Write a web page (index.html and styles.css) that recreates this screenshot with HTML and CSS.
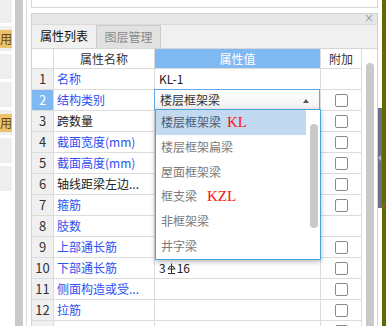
FILE: index.html
```html
<!DOCTYPE html>
<html lang="zh-CN">
<head>
    <meta charset="UTF-8">
    <title>属性列表</title>
    <link rel="stylesheet" href="styles.css">
</head>
<body>
<div class="screen">
    <div class="side">
        <div class="blk"></div>
        <div class="blk"><span class="tag">用</span></div>
        <div class="blk"></div>
        <div class="blk"></div>
        <div class="blk"><span class="tag">用</span></div>
        <div class="blk"></div>
        <div class="blk"></div>
    </div>
    <div class="gutter"></div>
    <div class="rail"></div>

    <div class="main">
        <div class="top-panel"></div>
        <div class="panel">
            <div class="panel-head"><span class="close">×</span></div>
            <div class="tabs">
                <div class="tab active">属性列表</div>
                <div class="tab">图层管理</div>
            </div>
            <div class="panel-body">
                <div class="grid">
                    <div class="c h"></div>
                    <div class="c h">属性名称</div>
                    <div class="c h hv">属性值</div>
                    <div class="c h">附加</div>

                    <div class="c n">1</div>
                    <div class="c name">名称</div>
                    <div class="c val">KL-1</div>
                    <div class="c chk"></div>

                    <div class="c n sel">2</div>
                    <div class="c name">结构类别</div>
                    <div class="c val">
                        <div class="select">楼层框架梁<span class="arrow"></span></div>
                    </div>
                    <div class="c chk"><span class="box"></span></div>

                    <div class="c n">3</div>
                    <div class="c name plain">跨数量</div>
                    <div class="c val"></div>
                    <div class="c chk"><span class="box"></span></div>

                    <div class="c n">4</div>
                    <div class="c name">截面宽度(mm)</div>
                    <div class="c val"></div>
                    <div class="c chk"><span class="box"></span></div>

                    <div class="c n">5</div>
                    <div class="c name">截面高度(mm)</div>
                    <div class="c val"></div>
                    <div class="c chk"><span class="box"></span></div>

                    <div class="c n">6</div>
                    <div class="c name plain">轴线距梁左边...</div>
                    <div class="c val"></div>
                    <div class="c chk"><span class="box"></span></div>

                    <div class="c n">7</div>
                    <div class="c name">箍筋</div>
                    <div class="c val"></div>
                    <div class="c chk"><span class="box"></span></div>

                    <div class="c n">8</div>
                    <div class="c name">肢数</div>
                    <div class="c val"></div>
                    <div class="c chk"></div>

                    <div class="c n">9</div>
                    <div class="c name">上部通长筋</div>
                    <div class="c val"></div>
                    <div class="c chk"><span class="box"></span></div>

                    <div class="c n">10</div>
                    <div class="c name">下部通长筋</div>
                    <div class="c val">3<svg class="bar" width="9" height="11" viewBox="0 0 9 11"><path d="M4.5 0.5v10M1.5 6a3 3 0 0 1 6 0M0.5 6h8M1 10.5h7" fill="none" stroke="#333" stroke-width="1"/></svg>16</div>
                    <div class="c chk"><span class="box"></span></div>

                    <div class="c n">11</div>
                    <div class="c name">侧面构造或受...</div>
                    <div class="c val"></div>
                    <div class="c chk"><span class="box"></span></div>

                    <div class="c n">12</div>
                    <div class="c name">拉筋</div>
                    <div class="c val"></div>
                    <div class="c chk"><span class="box"></span></div>

                    <div class="c n"></div>
                    <div class="c name"></div>
                    <div class="c val"></div>
                    <div class="c chk"><span class="box"></span></div>
                </div>
                <div class="vscroll"><div class="thumb"></div></div>

                <!-- 下拉列表 -->
                <div class="dropdown">
                    <div class="item on">楼层框架梁<span class="mark">KL</span></div>
                    <div class="item">楼层框架扁梁</div>
                    <div class="item">屋面框架梁</div>
                    <div class="item">框支梁<span class="mark wide">KZL</span></div>
                    <div class="item">非框架梁</div>
                    <div class="item">井字梁</div>
                    <div class="dd-thumb"></div>
                </div>
            </div>
        </div>
    </div>

    <div class="edge"><div class="handle"></div></div>
    <div class="olive"><span class="dot"></span></div>
</div>
</body>
</html>
```

FILE: styles.css
```css
body {
    margin: 0;
    width: 386px;
    height: 326px;
    overflow: hidden;
    background: #fff;
    font-family: "Noto Sans CJK SC", "Liberation Sans", sans-serif;
    font-size: 12px;
    color: #222;
}
.screen {
    display: flex;
    height: 326px;
}

/* 左侧工具条 */
.side {
    width: 12px;
    margin-right: 3px;
    margin-top: -2px;
    display: flex;
    flex-direction: column;
    gap: 3px;
}
.blk {
    height: 25px;
    flex: none;
    background: #efefef;
    display: flex;
    align-items: center;
}
.tag {
    display: block;
    width: 12px;
    height: 18px;
    line-height: 18px;
    background: #eec16d;
    color: #6b4300;
    overflow: hidden;
}
.gutter {
    width: 8px;
    background: #c9c9c9;
}
.rail {
    width: 3px;
    border-right: 1px solid #dcdcdc;
}

/* 主区域 */
.main {
    width: 347px;
    padding-left: 4px;
    display: flex;
    flex-direction: column;
}
.top-panel {
    height: 8px;
    box-sizing: border-box;
    border: 1px solid #d6d6d6;
    border-top: none;
    margin-bottom: 5px;
}
.panel {
    flex: 1;
    display: flex;
    flex-direction: column;
    border: 1px solid #d2d2d2;
    border-bottom: none;
    background: #f0f0f0;
    min-height: 0;
}
.panel-head {
    height: 10px;
    background: #e7e7e7;
    border-bottom: 1px solid #dadada;
    position: relative;
}
.close {
    position: absolute;
    right: 3px;
    top: -1px;
    font-size: 12px;
    line-height: 11px;
    color: #a6a6a6;
    font-family: "DejaVu Sans", sans-serif;
}
.tabs {
    height: 23px;
    display: flex;
}
.tab {
    width: 64px;
    box-sizing: border-box;
    text-align: center;
    line-height: 22px;
}
.tab.active {
    color: #111;
}
.tab:not(.active) {
    width: 65px;
    background: #e1e1e1;
    border: 1px solid #cbcbcb;
    border-bottom: none;
    color: #8a8a8a;
}
.panel-body {
    flex: 1;
    display: flex;
    position: relative;
    background: #fff;
    border-top: 1px solid #d6d6d6;
    overflow: hidden;
}

/* 属性表格 */
.grid {
    display: grid;
    grid-template-columns: 22px 101px 166px 41px;
    align-content: start;
}
.c {
    height: 21px;
    box-sizing: border-box;
    border-right: 1px solid #dcdcdc;
    border-bottom: 1px solid #dcdcdc;
    line-height: 20px;
    white-space: nowrap;
    overflow: hidden;
    position: relative;
}
.h {
    height: 20px;
    line-height: 19px;
    text-align: center;
    color: #333;
}
.hv {
    background: #7fb9f2;
    color: #fff;
}
.n {
    background: #f0f0f0;
    text-align: center;
    color: #333;
    font-size: 13px;
}
.n.sel {
    background: #7fb9f2;
    color: #fff;
}
.name {
    padding-left: 3px;
    color: #2e4ff0;
}
.name.plain {
    color: #222;
}
.val {
    padding-left: 4px;
    color: #222;
    overflow: visible;
}
.bar {
    vertical-align: -1px;
    margin: 0 1px;
}
.chk {
    display: flex;
    align-items: center;
    justify-content: center;
}
.box {
    width: 13px;
    height: 13px;
    box-sizing: border-box;
    border: 1px solid #8a8a8a;
    border-radius: 2px;
    background: #fff;
}
.select {
    position: absolute;
    top: -1px;
    left: -1px;
    right: 0;
    bottom: 0;
    border: 1px solid #62a8ea;
    background: linear-gradient(#fff, #f2f2f2);
    padding-left: 5px;
    line-height: 20px;
    color: #333;
}
.arrow {
    position: absolute;
    right: 10px;
    top: 9px;
    border-left: 3px solid transparent;
    border-right: 3px solid transparent;
    border-bottom: 4px solid #555;
}
.vscroll {
    width: 15px;
    position: relative;
}
.thumb {
    position: absolute;
    left: 4px;
    top: 14px;
    width: 8px;
    height: 300px;
    border-radius: 4px;
    background: #c9c9c9;
}

/* 下拉列表 */
.dropdown {
    position: absolute;
    left: 123px;
    top: 60px;
    width: 166px;
    box-sizing: border-box;
    border: 1px solid #46a6d8;
    background: #fff;
    box-shadow: 0 2px 5px rgba(0, 0, 0, 0.28);
}
.item {
    height: 24.8px;
    line-height: 24.8px;
    padding-left: 5px;
    margin-right: 14px;
    color: #7b7b7b;
    white-space: nowrap;
}
.item.on {
    background: #c2d9f1;
    color: #4d5a6c;
}
.mark {
    font-family: "Liberation Serif", serif;
    font-size: 15px;
    color: #ff1010;
    margin-left: 6px;
}
.mark.wide {
    margin-left: 10px;
}
.dd-thumb {
    position: absolute;
    right: 2px;
    top: 14px;
    width: 8px;
    height: 104px;
    border-radius: 4px;
    background: #c9c9c9;
}

/* 右侧边缘 */
.edge {
    width: 4px;
    position: relative;
}
.handle {
    position: absolute;
    top: 108px;
    left: 0;
    width: 4px;
    height: 100px;
    background: #687283;
}
.handle::after {
    content: "";
    position: absolute;
    top: 47px;
    left: 0;
    border-top: 3px solid transparent;
    border-bottom: 3px solid transparent;
    border-right: 3px solid #b4bac4;
}
.olive {
    width: 4px;
    background: #676700;
    position: relative;
}
.dot {
    position: absolute;
    top: 203px;
    left: 1px;
    width: 5px;
    height: 6px;
    border: 1px solid #2c9c2c;
    border-radius: 50%;
    box-sizing: border-box;
    background: #d03020;
}
```
